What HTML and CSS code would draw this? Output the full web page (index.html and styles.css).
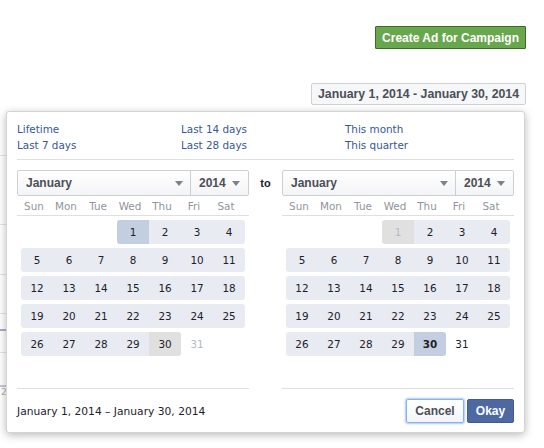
FILE: index.html
```html
<!DOCTYPE html>
<html>
<head>
<meta charset="utf-8">
<link rel="stylesheet" href="styles.css">
</head>
<body>
<div class="page">
  <div class="toolbar"><button class="btn-green">Create Ad for Campaign</button></div>
  <div class="daterow"><button class="btn-date">January 1, 2014 - January 30, 2014</button></div>
  <div class="chart">
    <div class="gap" style="height:50px"></div><div class="gl"></div>
    <div class="gap" style="height:68px"></div><div class="gl"></div>
    <div class="gap" style="height:49px"></div><div class="gl"></div>
    <div class="gap" style="height:38px"></div><div class="gl"></div>
    <div class="gap" style="height:15px"></div><div class="gl purple"></div>
    <div class="gap" style="height:21px"></div><div class="gl"></div>
    <div class="gap" style="height:32px"></div><div class="gl thick"></div>
    <div class="axis">2</div>
  </div>

  <div class="popup">
    <div class="presets">
      <div class="pcol"><a>Lifetime</a><a>Last 7 days</a></div>
      <div class="pcol"><a>Last 14 days</a><a>Last 28 days</a></div>
      <div class="pcol"><a>This month</a><a>This quarter</a></div>
    </div>
    <div class="cals">
      <div class="cal">
        <div class="select"><div class="sm">January<span class="arrow"></span></div><div class="sy">2014<span class="arrow"></span></div></div>
        <div class="dow"><span>Sun</span><span>Mon</span><span>Tue</span><span>Wed</span><span>Thu</span><span>Fri</span><span>Sat</span></div>
        <div class="grid">
          <span></span><span></span><span></span><span class="d sel rl">1</span><span class="d">2</span><span class="d">3</span><span class="d rr">4</span>
          <span class="d rl">5</span><span class="d">6</span><span class="d">7</span><span class="d">8</span><span class="d">9</span><span class="d">10</span><span class="d rr">11</span>
          <span class="d rl">12</span><span class="d">13</span><span class="d">14</span><span class="d">15</span><span class="d">16</span><span class="d">17</span><span class="d rr">18</span>
          <span class="d rl">19</span><span class="d">20</span><span class="d">21</span><span class="d">22</span><span class="d">23</span><span class="d">24</span><span class="d rr">25</span>
          <span class="d rl">26</span><span class="d">27</span><span class="d">28</span><span class="d">29</span><span class="d grey rr">30</span><span class="n off">31</span>
        </div>
      </div>
      <div class="to">to</div>
      <div class="cal">
        <div class="select"><div class="sm">January<span class="arrow"></span></div><div class="sy">2014<span class="arrow"></span></div></div>
        <div class="dow"><span>Sun</span><span>Mon</span><span>Tue</span><span>Wed</span><span>Thu</span><span>Fri</span><span>Sat</span></div>
        <div class="grid">
          <span></span><span></span><span></span><span class="d grey dis rl">1</span><span class="d">2</span><span class="d">3</span><span class="d rr">4</span>
          <span class="d rl">5</span><span class="d">6</span><span class="d">7</span><span class="d">8</span><span class="d">9</span><span class="d">10</span><span class="d rr">11</span>
          <span class="d rl">12</span><span class="d">13</span><span class="d">14</span><span class="d">15</span><span class="d">16</span><span class="d">17</span><span class="d rr">18</span>
          <span class="d rl">19</span><span class="d">20</span><span class="d">21</span><span class="d">22</span><span class="d">23</span><span class="d">24</span><span class="d rr">25</span>
          <span class="d rl">26</span><span class="d">27</span><span class="d">28</span><span class="d">29</span><span class="d sel bold rr">30</span><span class="n">31</span>
        </div>
      </div>
    </div>
    <div class="footer">
      <div class="range">January 1, 2014 – January 30, 2014</div>
      <div class="btns"><button class="btn-cancel">Cancel</button><button class="btn-ok">Okay</button></div>
    </div>
  </div>
</div>
</body>
</html>
```

FILE: styles.css
```css
* { box-sizing: border-box; }
html, body { margin: 0; padding: 0; background: #fff; }
body { width: 544px; height: 448px; overflow: hidden; font-family: "DejaVu Sans", sans-serif; }
.page { position: relative; padding-top: 26px; padding-right: 18px; height: 448px; }
.toolbar, .daterow { display: flex; justify-content: flex-end; }
.daterow { margin-top: 34px; }
button { font-family: "Liberation Sans", Arial, sans-serif; font-weight: bold; font-size: 12px; margin: 0; cursor: pointer; }
.btn-green { height: 23px; padding: 0 6px; background: #69a74e; border: 1px solid #3b6e22; color: #fff; border-radius: 1px; }
.btn-date { height: 22px; padding: 0 6px; background: #f6f7f9; border: 1px solid #ced0d4; color: #4b4f56; border-radius: 2px; font-size: 12.3px; }

.chart { width: 120px; display: flex; flex-direction: column; }
.gl { height: 1px; background: #e3e3e3; }
.gl.purple { height: 2px; background: #b7a5d0; }
.gl.thick { height: 2px; background: #c3c9d8; }
.axis { font-size: 9px; color: #b0b0b0; line-height: 10px; padding-left: 1px; }

.popup { position: absolute; left: 6px; top: 111px; width: 519px; background: #fff; border: 1px solid #d4d4d4; border-radius: 3px; box-shadow: 0 2px 8px rgba(0,0,0,0.28); padding: 9px 10px 0 10px; font-size: 10.4px; color: #1d2129; }
.presets { display: grid; grid-template-columns: 164px 164px 1fr; border-bottom: 1px solid #dddfe2; padding-bottom: 6px; }
.pcol { display: flex; flex-direction: column; }
.pcol a { color: #365899; line-height: 16px; }

.cals { display: flex; justify-content: space-between; margin-top: 10px; }
.cal { width: 232px; border-bottom: 1px solid #dddfe2; padding-bottom: 4px; }
.to { font-family: "Liberation Sans", Arial, sans-serif; font-weight: bold; font-size: 11px; color: #1d2129; line-height: 26px; }
.select { display: flex; height: 26px; border: 1px solid #ccd0d5; border-radius: 2px; background: linear-gradient(#ffffff, #f3f4f6); font-family: "Liberation Sans", Arial, sans-serif; font-weight: bold; font-size: 12px; color: #4b4f56; }
.sm { flex: 1; display: flex; align-items: center; justify-content: space-between; padding: 0 7px 0 8px; }
.sy { width: 58px; border-left: 1px solid #ccd0d5; display: flex; align-items: center; justify-content: space-between; padding: 0 8px 0 8px; }
.arrow { width: 0; height: 0; border-left: 4px solid transparent; border-right: 4px solid transparent; border-top: 5px solid #7d8188; }
.dow { display: grid; grid-template-columns: repeat(7, 32px); padding: 0 7px 0 1px; height: 20px; border-bottom: 1px solid #dddfe2; color: #90949c; line-height: 20px; text-align: center; }
.grid { display: grid; grid-template-columns: repeat(7, 32px); grid-template-rows: repeat(6, 24px); row-gap: 4px; padding: 0 4px; margin-top: 4px; }
.grid span { display: flex; align-items: center; justify-content: center; color: #1d2129; }
.d { background: #e9ebf2; }
.d.sel { background: #c3cee0; }
.d.grey { background: #e0e0e0; }
.d.dis, .n.off { color: #b5b9c0 !important; }
.bold { font-weight: bold; }
.rl { border-radius: 3px 0 0 3px; }
.rr { border-radius: 0 3px 3px 0; }

.footer { display: flex; justify-content: space-between; align-items: center; padding: 10px 0 9px 0; }
.range { font-size: 10.7px; }
.btns { display: flex; gap: 3px; }
.btn-cancel { height: 24px; width: 58px; background: linear-gradient(#fff, #f4f5f7); border: 1px solid #8cb1e8; color: #4b4f56; border-radius: 2px; box-shadow: 0 0 2px 1px #a9c8f3; }
.btn-ok { height: 24px; width: 47px; background: #4e69a2; border: 1px solid #435a8b; color: #fff; border-radius: 2px; }
```
